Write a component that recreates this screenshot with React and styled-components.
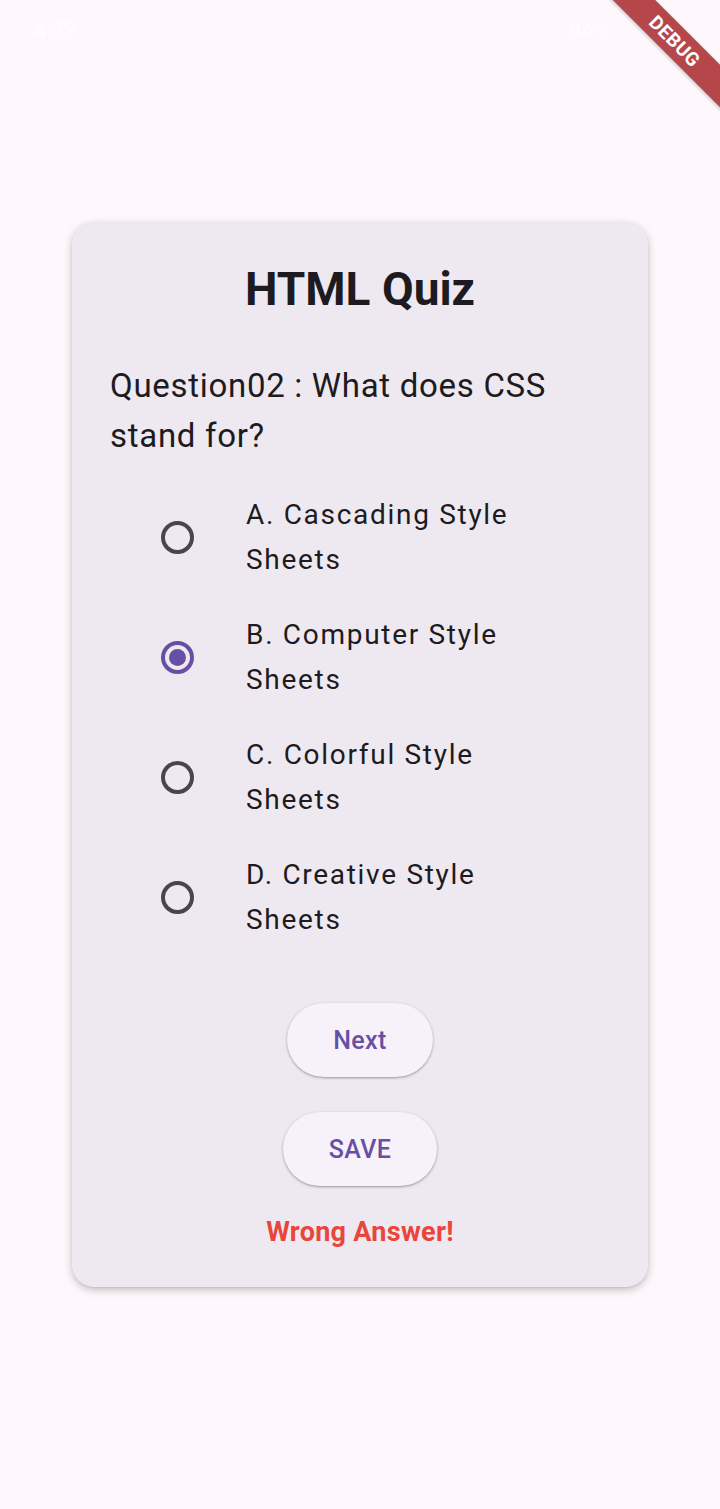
import React, { useState } from "react";
import styled, { createGlobalStyle } from "styled-components";

const Global = createGlobalStyle`
  html, body { margin: 0; padding: 0; }
  body {
    background: #fef7fc;
    font-family: Roboto, "Noto Sans", "Liberation Sans", sans-serif;
    color: #1d1b20;
    overflow: hidden;
  }
`;

const Page = styled.div`
  position: relative;
  width: 720px;
  min-height: 1509px;
  overflow: hidden;
  background: #fef7fc;
  display: flex;
  flex-direction: column;
  align-items: center;
`;

const StatusBar = styled.div`
  position: absolute;
  top: 0;
  left: 0;
  right: 0;
  height: 60px;
  display: flex;
  align-items: center;
  justify-content: space-between;
  padding: 0 110px 0 34px;
  box-sizing: border-box;
  color: rgba(255, 255, 255, 0.85);
  font-size: 22px;
`;

const Banner = styled.div`
  position: absolute;
  top: 26px;
  left: 555px;
  width: 240px;
  height: 30px;
  transform: rotate(45deg);
  background: #b5474a;
  box-shadow: 0 1px 4px rgba(0, 0, 0, 0.25);
  color: #fff;
  font-weight: 700;
  font-size: 19px;
  letter-spacing: 0.5px;
  display: flex;
  align-items: center;
  justify-content: center;
`;

const Card = styled.div`
  margin-top: 222px;
  width: 576px;
  box-sizing: border-box;
  background: #eee9f1;
  border-radius: 22px;
  box-shadow: 0 3px 8px rgba(0, 0, 0, 0.22), 0 1px 2px rgba(0, 0, 0, 0.08);
  padding: 40px 38px 39px;
  display: flex;
  flex-direction: column;
`;

const Title = styled.h1`
  margin: 0;
  text-align: center;
  font-size: 46px;
  line-height: 54px;
  font-weight: 700;
  color: #1d1b20;
`;

const Question = styled.p`
  margin: 45px 0 0;
  max-width: 480px;
  font-size: 33px;
  line-height: 50px;
  font-weight: 400;
  color: #1d1b20;
  letter-spacing: 0.7px;
`;

const Options = styled.div`
  margin-top: 16px;
  display: flex;
  flex-direction: column;
`;

const OptionRow = styled.label`
  display: flex;
  align-items: center;
  height: 120px;
  padding-left: 51px;
  cursor: pointer;
`;

const RadioOuter = styled.span`
  flex: none;
  width: 33px;
  height: 33px;
  box-sizing: border-box;
  border-radius: 50%;
  border: 4px solid ${(p) => (p.$checked ? "#6750a4" : "#49454f")};
  display: flex;
  align-items: center;
  justify-content: center;
`;

const RadioDot = styled.span`
  width: 17px;
  height: 17px;
  border-radius: 50%;
  background: #6750a4;
`;

const OptionText = styled.span`
  margin-left: 52px;
  max-width: 300px;
  font-size: 28px;
  line-height: 45px;
  letter-spacing: 1.7px;
  color: #1d1b20;
`;

const Actions = styled.div`
  margin-top: 46px;
  display: flex;
  flex-direction: column;
  align-items: center;
  gap: 35px;
`;

const PillButton = styled.button`
  height: 74px;
  padding: 0 46px;
  border: none;
  border-radius: 37px;
  background: #f7f2fa;
  color: #6750a4;
  font-family: Roboto, "Noto Sans", "Liberation Sans", sans-serif;
  font-size: 25px;
  font-weight: 500;
  letter-spacing: 0.4px;
  box-shadow: 0 1px 3px rgba(0, 0, 0, 0.3), 0 1px 1px rgba(0, 0, 0, 0.08);
  cursor: pointer;
`;

const Feedback = styled.div`
  margin-top: 30px;
  text-align: center;
  font-size: 27px;
  line-height: 32px;
  font-weight: 700;
  letter-spacing: 0.3px;
  color: #e9453a;
`;

const options = [
  "A. Cascading Style Sheets",
  "B. Computer Style Sheets",
  "C. Colorful Style Sheets",
  "D. Creative Style Sheets",
];

export default function App() {
  const [selected, setSelected] = useState(1);
  return (
    <Page>
      <Global />
      <StatusBar>
        <span>4:32</span>
        <span>94%</span>
      </StatusBar>
      <Banner>DEBUG</Banner>
      <Card>
        <Title>HTML Quiz</Title>
        <Question>Question02 : What does CSS stand for?</Question>
        <Options>
          {options.map((o, i) => (
            <OptionRow key={o} onClick={() => setSelected(i)}>
              <RadioOuter $checked={selected === i}>
                {selected === i && <RadioDot />}
              </RadioOuter>
              <OptionText>{o}</OptionText>
            </OptionRow>
          ))}
        </Options>
        <Actions>
          <PillButton>Next</PillButton>
          <PillButton>SAVE</PillButton>
        </Actions>
        <Feedback>Wrong Answer!</Feedback>
      </Card>
    </Page>
  );
}
